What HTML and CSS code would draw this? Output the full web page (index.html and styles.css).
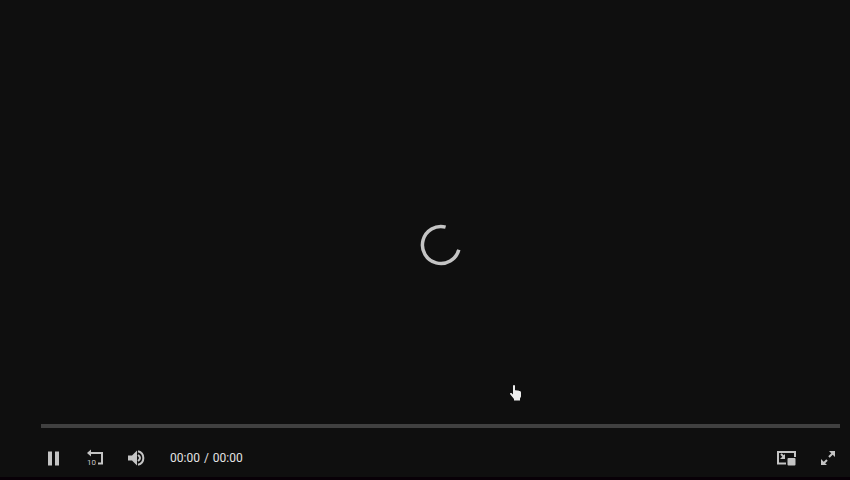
FILE: index.html
```html
<!DOCTYPE html>
<html lang="en">
<head>
<meta charset="utf-8">
<title>Video player</title>
<link rel="stylesheet" href="styles.css">
</head>
<body>
<main class="player">
  <div class="stage">
    <svg class="spinner" viewBox="0 0 42 42" role="img" aria-label="Loading">
      <path d="M25.6 3.1A18.5 18.5 0 1 0 38.8 25.8"/>
    </svg>
  </div>
  <input class="seek" type="range" min="0" max="100" value="0" aria-label="Seek">
  <div class="controls">
    <button class="control" type="button" aria-label="Pause">
      <svg viewBox="0 0 24 24"><path d="M6 5.5h4v14H6zM13 5.5h4v14h-4z"/></svg>
    </button>
    <button class="control" type="button" aria-label="Back 10 seconds">
      <svg viewBox="0 0 24 24"><path class="line" d="M7 7h11v10.5h-4"/><path d="M3 7l4-3.5v7z"/><text class="seconds" x="3" y="19">10</text></svg>
    </button>
    <button class="control" type="button" aria-label="Mute">
      <svg viewBox="0 0 24 24"><path d="M2 9.500h4l5-5v15l-5-5H2z"/><path class="line" d="M12 9q4 3 0 6M12 5.200a7 7 0 0 1 0 13.600"/></svg>
    </button>
    <span class="time">00:00<span class="slash">/</span>00:00</span>
    <span class="space"></span>
    <button class="control" type="button" aria-label="Picture in picture">
      <svg viewBox="0 0 24 24"><path class="line" d="M12 17.500H4V6h17v5"/><rect x="13.500" y="12" width="8" height="7.500" rx="1"/><path class="line" d="M7 8l3 3"/><path d="M11 8v5H6z"/></svg>
    </button>
    <button class="control" type="button" aria-label="Full screen">
      <svg viewBox="0 0 24 24"><path class="line" d="M13 11l4-4M11 14l-4 4"/><path d="M13 5h6v6zM5 13v6h6z"/></svg>
    </button>
  </div>
  <svg class="pointer" viewBox="0 0 14 18" aria-hidden="true">
    <path d="M4 1.5q1-1.2 2 0v5l1-.5 1 .8 1-.6 1 .9q2-.7 2 1.4v4l-1 2v2H5v-1.5L1 10q-.2-1.5 1.5-1L4 10.5z"/>
  </svg>
</main>
</body>
</html>
```
FILE: styles.css
```css
* {
  box-sizing: border-box;
}

body {
  margin: 0;
  background: #0f0f0f;
  color: #e4e4e4;
  font-family: Roboto, "Liberation Sans", sans-serif;
}

.player {
  position: relative;
  display: flex;
  flex-direction: column;
  min-height: 100vh;
  padding: 0 10px 0 41px;
  border-bottom: 3px solid #080007;
}

.stage {
  flex: 1;
  display: grid;
  place-items: center;
  padding-top: 66px;
}

.spinner {
  width: 42px;
  height: 42px;
  fill: none;
  stroke: #c4c4c4;
  stroke-width: 3.5;
}

.seek {
  appearance: none;
  width: 100%;
  height: 4px;
  margin: 0;
  background: #404040;
}

.seek::-webkit-slider-thumb {
  appearance: none;
  width: 0;
  height: 0;
}

.controls {
  display: flex;
  align-items: center;
  gap: 18px;
  height: 49px;
  padding: 11px 0 0 1px;
}

.control {
  width: 24px;
  height: 24px;
  padding: 0;
  border: 0;
  background: none;
  color: #c4c4c4;
}

.control svg {
  display: block;
  width: 24px;
  height: 24px;
  fill: currentColor;
}

.control .line {
  fill: none;
  stroke: currentColor;
  stroke-width: 2;
}

.seconds {
  font-family: Roboto, "Liberation Sans", sans-serif;
  font-size: 8px;
}

.time {
  margin-left: 2px;
  font-size: 12px;
  line-height: 16px;
  white-space: nowrap;
}

.slash {
  margin: 0 4px;
}

.space {
  flex: 1;
}

.pointer {
  position: absolute;
  left: 509px;
  top: 384px;
  width: 14px;
  height: 18px;
  fill: #ededed;
}
```
